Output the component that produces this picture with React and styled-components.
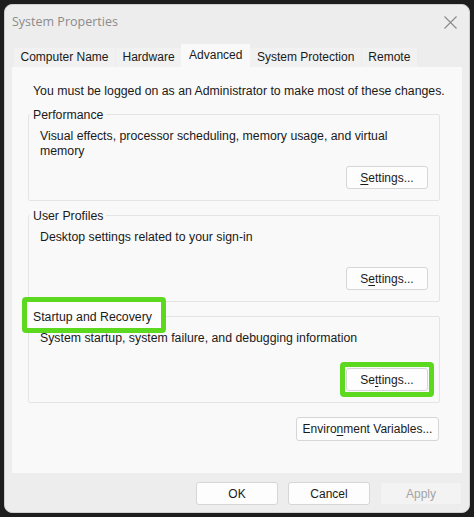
import React from 'react';
import styled, { createGlobalStyle } from 'styled-components';

const GlobalStyle = createGlobalStyle`
  body {
    margin: 0;
    background: #1d1d1d;
    font-family: "Liberation Sans", Arial, sans-serif;
    font-size: 12px;
    color: #1a1a1a;
  }
`;

const GREEN = '#5cd91e';

const Screen = styled.div`
  width: 474px;
  height: 517px;
  box-sizing: border-box;
  padding: 4px;
`;

const Window = styled.div`
  height: 100%;
  box-sizing: border-box;
  background: #ededed;
  border: 1px solid #cfcfcf;
  border-radius: 8px;
  display: flex;
  flex-direction: column;
  overflow: hidden;
`;

const TitleBar = styled.div`
  height: 39px;
  display: flex;
  align-items: flex-start;
  justify-content: space-between;
  padding: 9px 11px 0 7px;
  box-sizing: border-box;
`;

const Title = styled.div`
  font-family: "Open Sans", sans-serif;
  font-size: 12.5px;
  color: #8b8b8b;
  line-height: 16px;
`;

const CloseButton = styled.div`
  width: 16px;
  height: 16px;
  display: flex;
  align-items: center;
  justify-content: center;
`;

const TabStrip = styled.div`
  height: 23px;
  display: flex;
  align-items: flex-end;
  gap: 1px;
  padding-left: 9px;
`;

const Tab = styled.div`
  height: ${p => (p.$active ? '23px' : '19px')};
  line-height: ${p => (p.$active ? '22px' : '19px')};
  padding: 0 ${p => (p.$active ? '8px' : '6.5px')};
  margin: 0 ${p => (p.$active ? '-1px' : '0')};
  background: ${p => (p.$active ? '#f9f9f9' : '#f1f1f1')};
  position: relative;
  z-index: ${p => (p.$active ? 1 : 0)};
  white-space: nowrap;
`;

const Panel = styled.div`
  flex: 1;
  margin: 0 7px;
  background: #f9f9f9;
  display: flex;
  flex-direction: column;
  padding: 16px 22px 0 16px;
  font-size: 12.3px;
`;

const Intro = styled.div`
  line-height: 16px;
  margin: 0 0 15px 5px;
  white-space: nowrap;
`;

const GroupBox = styled.div`
  height: 87px;
  box-sizing: border-box;
  border: 1px solid #e4e4e4;
  border-radius: 2px;
  padding: 0 11px 11px;
  display: flex;
  flex-direction: column;
  margin-bottom: 14px;
  position: relative;
  z-index: ${p => (p.$raised ? 2 : 0)};
`;

const GroupTitle = styled.div`
  align-self: flex-start;
  margin: -7px 0 0 -10px;
  padding: 0 3px;
  line-height: 15px;
  background: #f9f9f9;
  position: relative;
  z-index: 1;

  ${p =>
    p.$highlight &&
    `
    &::before {
      content: '';
      position: absolute;
      z-index: -1;
      left: -8px;
      right: -11px;
      top: -13px;
      bottom: -8px;
      border: 5px solid ${GREEN};
      border-radius: 4px;
      background: #fdfdfd;
    }
  `}
`;

const Description = styled.div`
  margin-top: 6px;
  line-height: 15px;
`;

const Button = styled.button`
  font-family: "Liberation Sans", Arial, sans-serif;
  font-size: 12px;
  color: ${p => (p.disabled ? '#a3a3a3' : '#1a1a1a')};
  background: ${p => (p.disabled ? '#f3f3f3' : '#fdfdfd')};
  border: 1px solid ${p => (p.disabled ? '#ececec' : '#d6d6d6')};
  border-radius: 3px;
  height: ${p => p.$h || 23}px;
  width: ${p => p.$w || 82}px;
  padding: 0;
  position: relative;
  box-sizing: border-box;

  u {
    text-underline-offset: 2px;
  }

  ${p =>
    p.$highlight &&
    `
    &::after {
      content: '';
      position: absolute;
      inset: -7px;
      border: 5px solid ${GREEN};
      border-radius: 4px;
    }
  `}
`;

const GroupButton = styled(Button)`
  margin-top: auto;
  align-self: flex-end;
`;

const EnvButton = styled(Button)`
  align-self: flex-end;
  margin-right: 1px;
`;

const Footer = styled.div`
  display: flex;
  justify-content: flex-end;
  gap: 10px;
  padding: 9px 7px 7px;
`;

const tabs = ['Computer Name', 'Hardware', 'Advanced', 'System Protection', 'Remote'];

function Group({ title, text, accel, highlight }) {
  return (
    <GroupBox $raised={highlight}>
      <GroupTitle $highlight={highlight}>{title}</GroupTitle>
      <Description>{text}</Description>
      <GroupButton $highlight={highlight}>
        {accel[0]}
        <u>{accel[1]}</u>
        {accel[2]}
      </GroupButton>
    </GroupBox>
  );
}

export default function App() {
  return (
    <Screen>
      <GlobalStyle />
      <Window>
        <TitleBar>
          <Title>System Properties</Title>
          <CloseButton>
            <svg width="13" height="13" viewBox="0 0 13 13">
              <path d="M0.5 0.5 L12.5 12.5 M12.5 0.5 L0.5 12.5" stroke="#8a8a8a" strokeWidth="1.1" />
            </svg>
          </CloseButton>
        </TitleBar>
        <TabStrip>
          {tabs.map(t => (
            <Tab key={t} $active={t === 'Advanced'}>
              {t}
            </Tab>
          ))}
        </TabStrip>
        <Panel>
          <Intro>You must be logged on as an Administrator to make most of these changes.</Intro>
          <Group
            title="Performance"
            text="Visual effects, processor scheduling, memory usage, and virtual memory"
            accel={['', 'S', 'ettings...']}
          />
          <Group
            title="User Profiles"
            text="Desktop settings related to your sign-in"
            accel={['S', 'e', 'ttings...']}
          />
          <Group
            title="Startup and Recovery"
            text="System startup, system failure, and debugging information"
            accel={['Se', 't', 'tings...']}
            highlight
          />
          <EnvButton $w={143} $h={24}>
            Enviro<u>n</u>ment Variables...
          </EnvButton>
        </Panel>
        <Footer>
          <Button>OK</Button>
          <Button>Cancel</Button>
          <Button disabled>Apply</Button>
        </Footer>
      </Window>
    </Screen>
  );
}
